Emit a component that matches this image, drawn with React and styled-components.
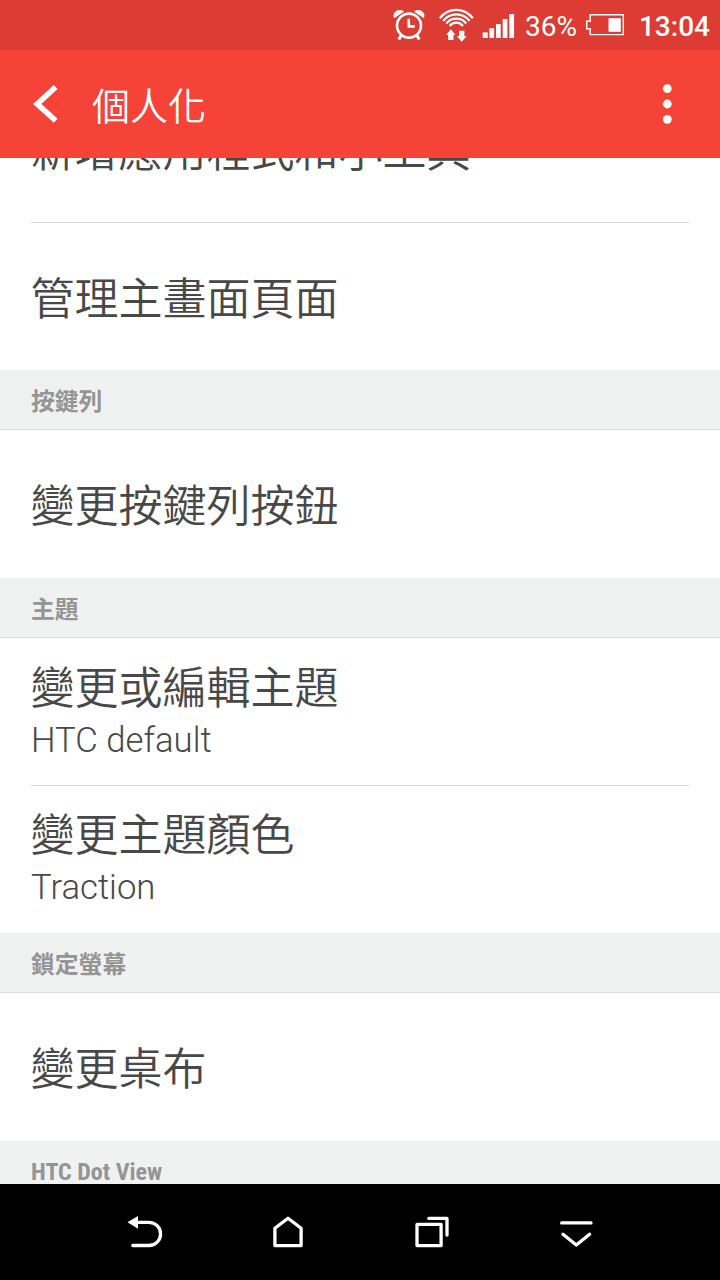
import React from 'react';
import styled, { createGlobalStyle } from 'styled-components';

const GlobalStyle = createGlobalStyle`
  body {
    margin: 0;
    background: #000;
    font-family: Roboto, 'Noto Sans CJK TC', sans-serif;
  }
`;

const sections = [
  {
    items: [
      { title: '新增應用程式和小工具' },
      { title: '管理主畫面頁面' },
    ],
  },
  { header: '按鍵列', items: [{ title: '變更按鍵列按鈕' }] },
  {
    header: '主題',
    items: [
      { title: '變更或編輯主題', value: 'HTC default' },
      { title: '變更主題顏色', value: 'Traction' },
    ],
  },
  { header: '鎖定螢幕', items: [{ title: '變更桌布' }] },
  { header: 'HTC Dot View', latin: true, items: [] },
];

const AlarmIcon = () => (
  <svg width="34" height="50" viewBox="393 0 34 50" fill="none" stroke="#fff">
    <circle cx="409" cy="25.6" r="12" strokeWidth="2.6" />
    <path d="M408.8 18.8V26.4H414.8" strokeWidth="2.6" />
    <path d="M401.2 35.3L398.8 39.6M416.8 35.3L419.2 39.6" strokeWidth="3" />
    <path d="M394.4 17.6C392.7 13 397.2 8.4 403.4 11.4ZM423.6 17.6C425.3 13 420.8 8.4 414.6 11.4Z" fill="#fff" strokeWidth="1" />
  </svg>
);

const WifiIcon = () => (
  <svg width="36" height="50" viewBox="437 0 36 50" fill="none" stroke="#fff" strokeWidth="2.2">
    <path d="M439.8 18.2C448.5 7.2 464 7.2 472.8 18.2" />
    <path d="M443.1 20.9C450 12.1 462.6 12.1 469.6 20.9" />
    <path d="M446.4 23.5C451.4 17 461.2 17 466.2 23.5" />
    <path d="M449.6 26C453.2 21.6 459.4 21.6 463 26" />
    <path d="M450.8 29.2L455.4 34.8H453.5V40H448.1V34.8H446.2ZM461.7 41.8L456.8 36.2H459V30.8H464.4V36.2H466.6Z" fill="#fff" stroke="none" />
  </svg>
);

const SignalIcon = () => (
  <svg width="32" height="50" viewBox="483 0 32 50" fill="#fff">
    <rect x="482.7" y="32.4" width="5" height="5.6" />
    <rect x="489.4" y="28.2" width="4.7" height="9.8" />
    <rect x="496" y="24" width="4.7" height="14" />
    <rect x="502.7" y="19" width="4.7" height="19" />
    <rect x="509.3" y="14" width="4.8" height="24" />
  </svg>
);

const BatteryIcon = () => (
  <svg width="40" height="50" viewBox="585 0 40 50" fill="none">
    <path d="M590.2 14.8H623.3V34.6H590.2V28.8H586.7V21.2H590.2Z" stroke="#fff" strokeWidth="1.4" />
    <rect x="608.5" y="18.2" width="12.3" height="13.6" fill="#fff" />
  </svg>
);

const BackIcon = () => (
  <svg width="30" height="44" viewBox="30 82 30 44">
    <path d="M55.7 87L37.2 103.9L55.7 120.8" fill="none" stroke="#fff" strokeWidth="5.6" />
  </svg>
);

const MoreIcon = () => (
  <svg width="12" height="44" viewBox="0 0 12 44" fill="#fff">
    <circle cx="6.3" cy="6.6" r="4.4" />
    <circle cx="6.3" cy="22" r="4.4" />
    <circle cx="6.3" cy="37.3" r="4.4" />
  </svg>
);

const App = () => (
  <Screen>
    <GlobalStyle />
    <StatusBar>
      <AlarmIcon />
      <WifiIcon />
      <SignalIcon />
      <Percent>36%</Percent>
      <BatteryIcon />
      <Clock>13:04</Clock>
    </StatusBar>
    <TitleBar>
      <IconButton aria-label="返回"><BackIcon /></IconButton>
      <Title>個人化</Title>
      <IconButton aria-label="更多"><MoreIcon /></IconButton>
    </TitleBar>
    <List>
      {sections.map((section, i) => (
        <section key={i}>
          {section.header && (
            <SectionHeader>
              <SectionLabel $latin={section.latin}>{section.header}</SectionLabel>
            </SectionHeader>
          )}
          {section.items.map((item, j) => (
            <Row
              key={item.title}
              $double={Boolean(item.value)}
              $divider={j < section.items.length - 1}
              $short={j > 0}
            >
              <RowTitle>{item.title}</RowTitle>
              {item.value && <RowValue>{item.value}</RowValue>}
            </Row>
          ))}
        </section>
      ))}
    </List>
    <NavBar>
      <NavButton aria-label="返回">
        <NavIcon viewBox="120 1208 48 48">
          <path d="M138 1222.3H149A11.6 11.6 0 0 1 149 1245.5H132.8" />
          <path d="M127.5 1222.3L138 1215.9V1228.7Z" fill="#fff" stroke="none" />
        </NavIcon>
      </NavButton>
      <NavButton aria-label="主畫面">
        <NavIcon viewBox="264 1208 48 48">
          <path d="M274.9 1245.6V1228.2L288 1218.2L301.1 1228.2V1245.6Z" />
        </NavIcon>
      </NavButton>
      <NavButton aria-label="最近使用">
        <NavIcon viewBox="408 1208 48 48">
          <path d="M417 1224.4H441.1V1245.6H417Z" />
          <path d="M428.8 1218.4H447V1235" />
        </NavIcon>
      </NavButton>
      <NavButton aria-label="隱藏">
        <NavIcon viewBox="552 1208 48 48">
          <path d="M561.7 1222.9H591" />
          <path d="M563 1234.3L576.3 1245L589.6 1234.3" />
        </NavIcon>
      </NavButton>
    </NavBar>
  </Screen>
);

const Screen = styled.div`
  width: 720px;
  height: 1280px;
  display: flex;
  flex-direction: column;
  overflow: hidden;
  background: #fff;
`;

const StatusBar = styled.div`
  flex: none;
  height: 50px;
  display: flex;
  align-items: center;
  justify-content: flex-end;
  padding-right: 10px;
  background: #dc3c33;
  color: #fff;

  svg {
    flex: none;
    overflow: visible;
  }

  svg + svg {
    margin-left: 10px;
  }
`;

const Percent = styled.span`
  width: 53px;
  margin: 4px 7px 0 10px;
  font-size: 28px;
  line-height: 32px;
  white-space: nowrap;
`;

const Clock = styled.span`
  margin: 4px 0 0 14px;
  font-size: 28px;
  font-weight: 500;
  line-height: 32px;
`;

const TitleBar = styled.header`
  flex: none;
  height: 108px;
  display: flex;
  align-items: center;
  box-sizing: border-box;
  padding: 0 47px 0 30px;
  background: #f54337;
`;

const IconButton = styled.button`
  display: flex;
  padding: 0;
  border: 0;
  background: none;
`;

const Title = styled.h1`
  flex: 1;
  margin: 0 0 0 32px;
  padding-top: 5px;
  color: #fff;
  font-size: 38px;
  font-weight: 350;
  line-height: 56px;
`;

/* the list is scrolled, its first row is partly under the title bar */
const List = styled.main`
  flex: 1;
  min-height: 0;
  display: flex;
  flex-direction: column;
  justify-content: flex-end;
  overflow: hidden;

  section {
    flex: none;
  }

  section:last-child {
    height: 43px;
    overflow: hidden;
  }
`;

const rowPadding = ({ $double, $short }) => {
  if (!$double) return '6px';
  return $short ? '20px' : '21px';
};

const Row = styled.div`
  height: ${({ $short }) => ($short ? '147px' : '148px')};
  display: flex;
  flex-direction: column;
  justify-content: ${({ $double }) => ($double ? 'flex-start' : 'center')};
  box-sizing: border-box;
  margin: 0 31px;
  padding-top: ${rowPadding};
  border-bottom: ${({ $divider }) => ($divider ? '1px solid #d9dada' : 'none')};
`;

const RowTitle = styled.div`
  margin-left: -0.5px;
  color: #484848;
  font-size: 44px;
  font-weight: 350;
  line-height: 60px;
  white-space: nowrap;
`;

const RowValue = styled.div`
  margin-top: -1px;
  color: #484848;
  font-size: 34.7px;
  font-weight: 300;
  line-height: 44px;
`;

const SectionHeader = styled.div`
  height: 60px;
  display: flex;
  align-items: center;
  box-sizing: border-box;
  padding: 3px 31px 0;
  border-bottom: 1px solid #dcdddd;
  background: #f0f2f1;
`;

const SectionLabel = styled.h2`
  margin: 0;
  padding-top: ${({ $latin }) => ($latin ? '0' : '2px')};
  color: #959595;
  font-family: ${({ $latin }) => ($latin ? "'Roboto Condensed', Roboto, sans-serif" : 'inherit')};
  font-size: ${({ $latin }) => ($latin ? '24px' : '23.8px')};
  font-weight: 700;
  font-stretch: ${({ $latin }) => ($latin ? '75%' : 'normal')};
  line-height: 32px;
`;

const NavBar = styled.nav`
  flex: none;
  height: 96px;
  display: flex;
  justify-content: center;
  background: #000;
`;

const NavButton = styled(IconButton)`
  width: 144px;
  align-items: center;
  justify-content: center;
`;

const NavIcon = styled.svg`
  width: 48px;
  height: 48px;
  fill: none;
  stroke: #fff;
  stroke-width: 3.3;
  stroke-linecap: round;
  stroke-linejoin: round;
`;

export default App;
